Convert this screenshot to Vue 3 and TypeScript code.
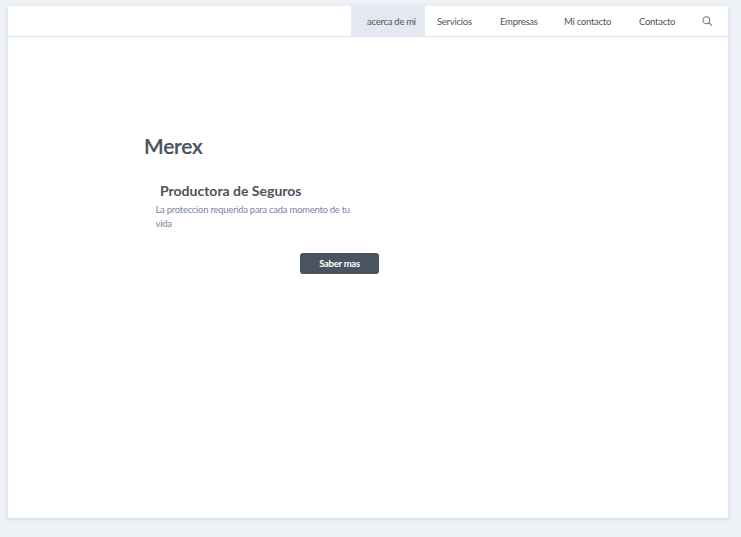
<script setup lang="ts">
import { ref } from 'vue'

const links: { label: string; name: string }[] = [
  { label: 'acerca de mi', name: 'about' },
  { label: 'Servicios', name: 'services' },
  { label: 'Empresas', name: 'companies' },
  { label: 'Mi contacto', name: 'my-contact' },
  { label: 'Contacto', name: 'contact' },
]
const active = ref('about')
</script>

<template>
  <div class="page">
    <div class="sheet">
      <nav class="nav">
        <a v-for="link in links" :key="link.name" class="link" :class="[link.name, { active: active === link.name }]" @click="active = link.name">{{ link.label }}</a>
        <svg class="search" viewBox="0 0 10 10"><circle cx="4.4" cy="4.2" r="3.4" /><path d="M6.8 6.6 9.8 9.6" /></svg>
      </nav>
      <main class="hero">
        <h1>Merex</h1>
        <h2>Productora de Seguros</h2>
        <p>La proteccion requerida para cada momento de tu vida</p>
        <button>Saber mas</button>
      </main>
    </div>
  </div>
</template>

<style>
body { margin: 0; background: #eef2f7; }
</style>
<style scoped>
.page { box-sizing: border-box; height: 537px; padding: 6px 13px 19px 8px; background: #eef2f7; font-family: Lato, sans-serif; color: #4a5260; }
.sheet { height: 512px; background: #fff; box-shadow: 0 1px 4px #cfd6e0; }
.nav { box-sizing: border-box; height: 31px; display: flex; justify-content: flex-end; align-items: stretch; border-bottom: 1px solid #dfe2e7; padding-right: 16px; }
.link { box-sizing: border-box; font-size: 9.5px; line-height: 31px; letter-spacing: -0.26px; white-space: nowrap; cursor: pointer; color: #4e5560; }
.about { width: 74px; padding-left: 16px; }
.services { width: 63px; padding-left: 12px; }
.companies { width: 64px; padding-left: 12px; }
.my-contact { width: 75px; padding-left: 12px; }
.contact { width: 75px; padding-left: 12px; }
.active { background: #e3e8f1; }
.search { width: 10px; height: 10px; align-self: center; fill: none; stroke: #747a83; stroke-width: 1.1; }
.hero { width: 235px; padding: 96px 0 0 136px; }
h1 { margin: 0; font-size: 21px; line-height: 26px; font-weight: 600; letter-spacing: -0.2px; -webkit-text-stroke: 0.2px #4a5260; }
h2 { margin: 22px 0 0 16px; font-size: 14px; line-height: 20px; font-weight: 700; white-space: nowrap; }
p { margin: 2px 0 0 11.5px; width: 205px; font-size: 9.5px; line-height: 14px; letter-spacing: -0.27px; color: #7a889c; }
button { display: block; margin: 22px 0 0 156px; width: 79px; height: 21px; border: 0; border-radius: 3px; background: #4a5460; color: #fff; font: 700 9.5px/21px Lato, sans-serif; letter-spacing: -0.26px; padding: 0; }
</style>
